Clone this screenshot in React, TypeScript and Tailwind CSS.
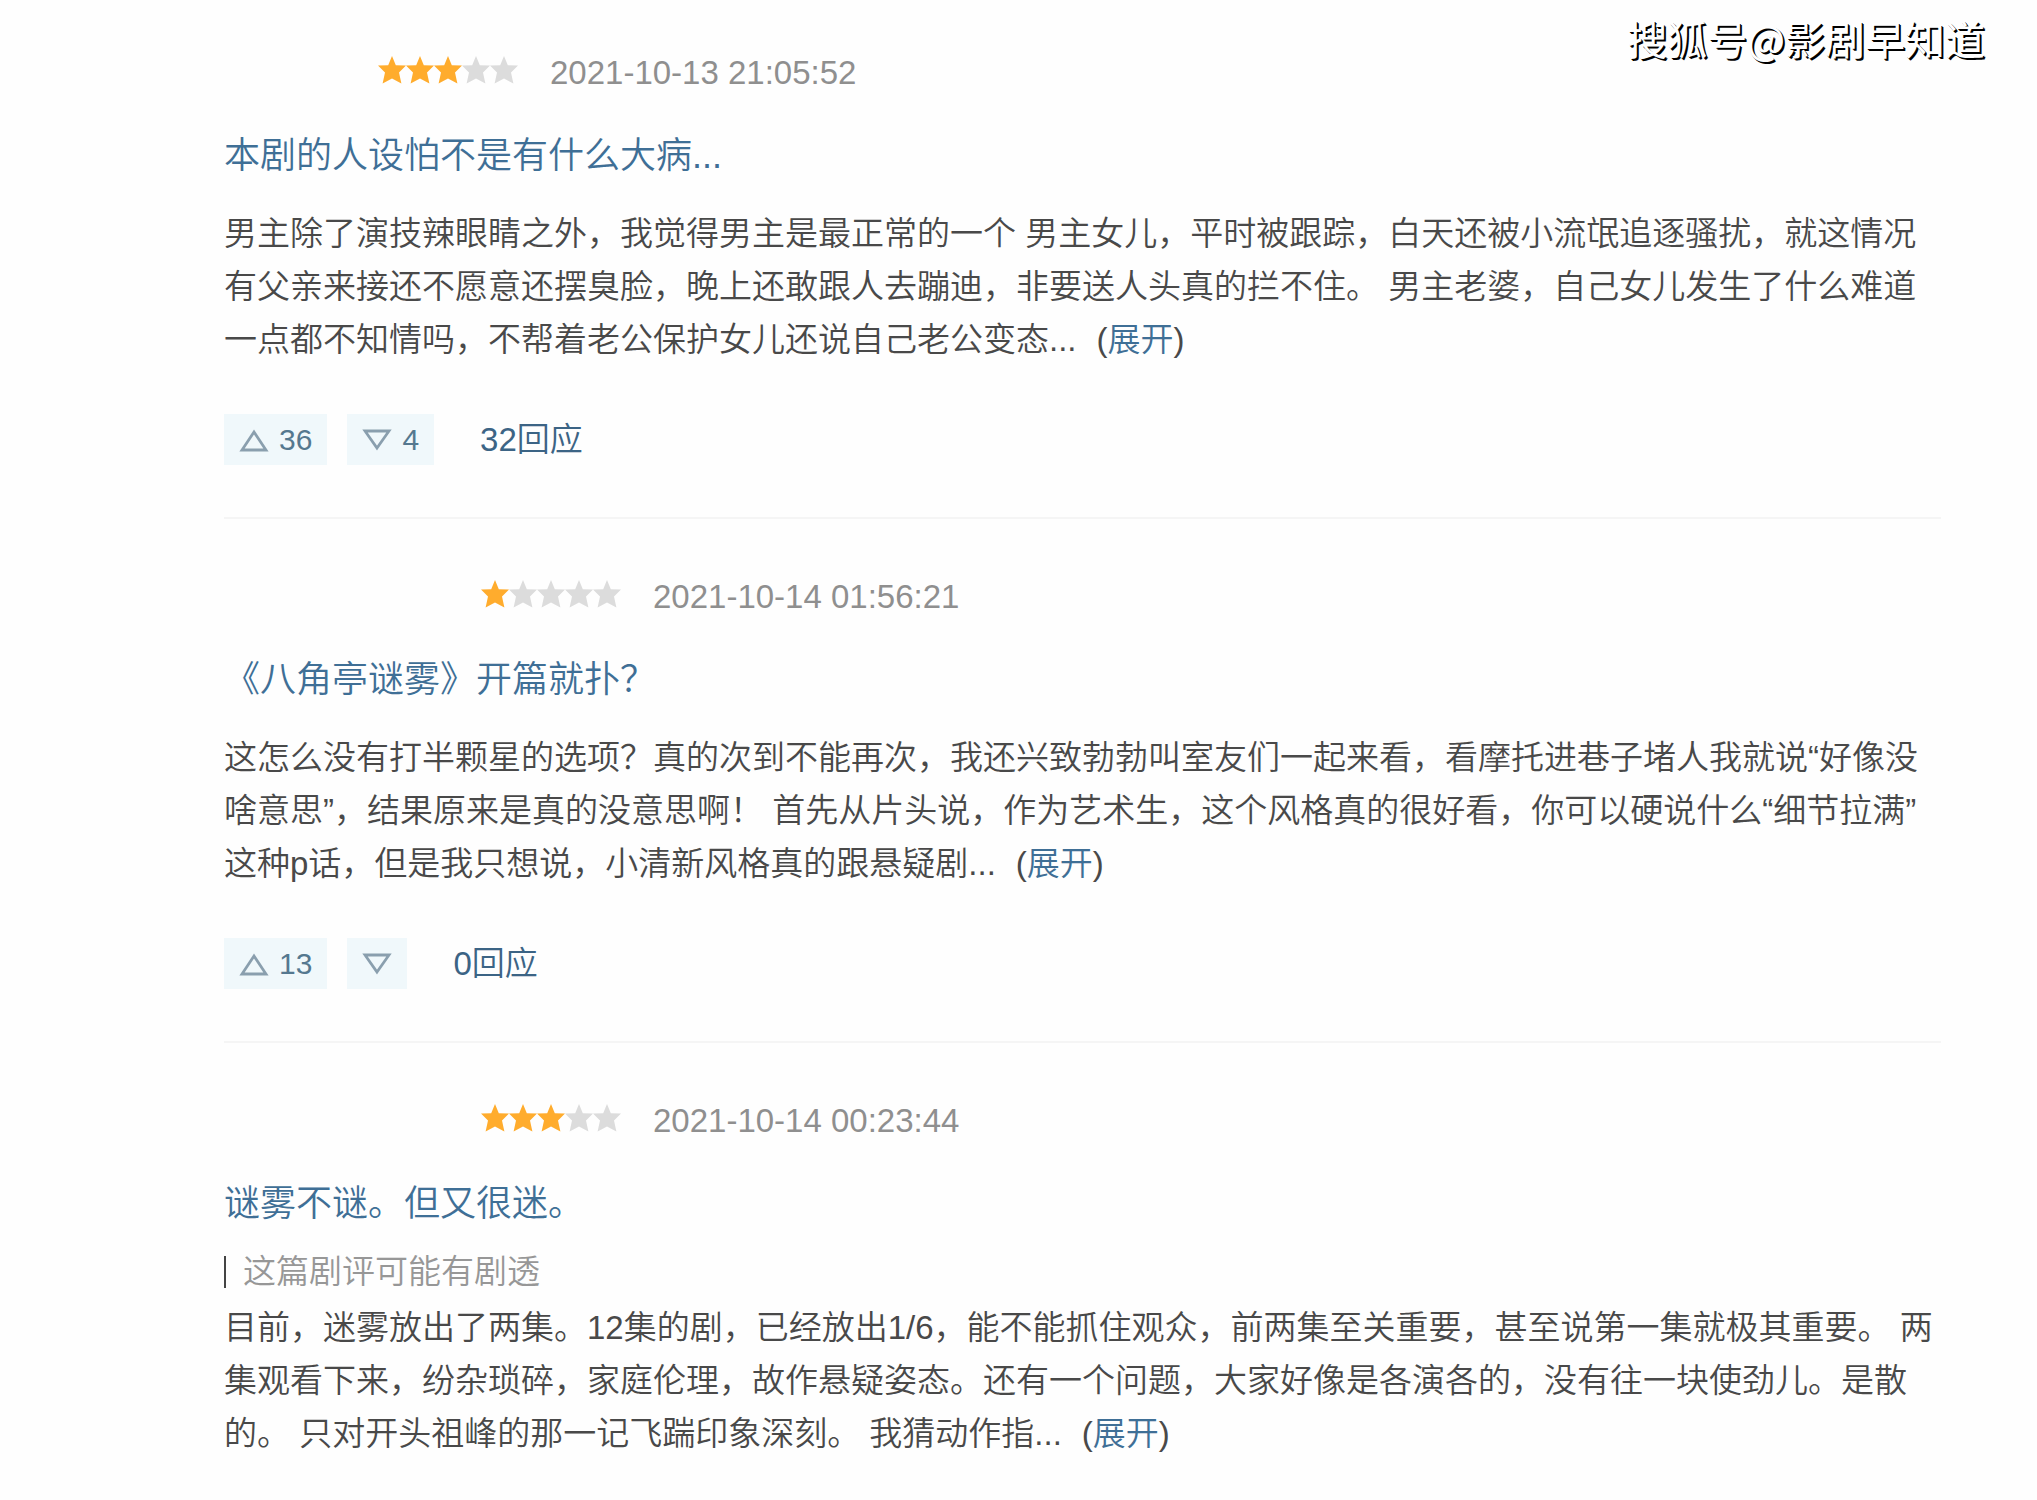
import React from 'react';

type Review = {
  stars: number;
  nameWidth: string;
  date: string;
  title: string;
  spoiler?: boolean;
  body: string;
  up: string;
  down: string;
  replies?: string;
};

const reviews: Review[] = [
  {
    stars: 3,
    nameWidth: 'w-[154px]',
    date: '2021-10-13 21:05:52',
    title: '本剧的人设怕不是有什么大病...',
    body: '男主除了演技辣眼睛之外，我觉得男主是最正常的一个 男主女儿，平时被跟踪，白天还被小流氓追逐骚扰，就这情况有父亲来接还不愿意还摆臭脸，晚上还敢跟人去蹦迪，非要送人头真的拦不住。 男主老婆，自己女儿发生了什么难道一点都不知情吗，不帮着老公保护女儿还说自己老公变态...',
    up: '36',
    down: '4',
    replies: '32回应',
  },
  {
    stars: 1,
    nameWidth: 'w-[257px]',
    date: '2021-10-14 01:56:21',
    title: '《八角亭谜雾》开篇就扑？',
    body: '这怎么没有打半颗星的选项？真的次到不能再次，我还兴致勃勃叫室友们一起来看，看摩托进巷子堵人我就说“好像没啥意思”，结果原来是真的没意思啊！ 首先从片头说，作为艺术生，这个风格真的很好看，你可以硬说什么“细节拉满”这种p话，但是我只想说，小清新风格真的跟悬疑剧...',
    up: '13',
    down: '',
    replies: '0回应',
  },
  {
    stars: 3,
    nameWidth: 'w-[257px]',
    date: '2021-10-14 00:23:44',
    title: '谜雾不谜。但又很迷。',
    spoiler: true,
    body: '目前，迷雾放出了两集。12集的剧，已经放出1/6，能不能抓住观众，前两集至关重要，甚至说第一集就极其重要。 两集观看下来，纷杂琐碎，家庭伦理，故作悬疑姿态。还有一个问题，大家好像是各演各的，没有往一块使劲儿。是散的。 只对开头祖峰的那一记飞踹印象深刻。 我猜动作指...',
    up: '',
    down: '',
  },
];

function Stars({ count }: { count: number }) {
  return (
    <div role="img" aria-label={`${count}/5`} className="mb-[6px] flex">
      {[0, 1, 2, 3, 4].map((i) => (
        <svg
          key={i}
          viewBox="0 0 28 28"
          className={i < count ? 'h-7 w-7 fill-[#ffac2d]' : 'h-7 w-7 fill-[#dcdcdc]'}
        >
          <path d="M14 0 L17.8 9.2 L28 9.6 L21 16.6 L23.4 27.4 L14 22.6 L4.6 27.4 L7 16.6 L0 9.6 L10.2 9.2 Z" />
        </svg>
      ))}
    </div>
  );
}

function Vote({ dir, count }: { dir: 'up' | 'down'; count: string }) {
  return (
    <button
      type="button"
      aria-label={dir === 'up' ? '有用' : '没用'}
      className="flex h-[51px] items-center gap-[10px] bg-[#f0f8fb] px-[15px] text-[30px] text-[#55788f]"
    >
      <svg viewBox="0 0 30 24" className="h-6 w-[30px] fill-none stroke-[#8a9fae]" strokeWidth="2.8">
        {dir === 'up' ? <path d="M15 4 L27 22 H3 Z" /> : <path d="M15 20 L27 3 H3 Z" />}
      </svg>
      {count && <span>{count}</span>}
    </button>
  );
}

function ReviewItem({ review, last }: { review: Review; last: boolean }) {
  return (
    <article className={last ? '' : 'mb-[53px] border-b-2 border-[#f5f5f5] pb-[52px]'}>
      <header className="flex h-[50px] items-center">
        <span className={`${review.nameWidth} shrink-0`} />
        <Stars count={review.stars} />
        <time className="ml-8 text-[33px] text-[#8f8f8f]">{review.date}</time>
      </header>
      <h2 className="mt-[34px] text-4xl leading-[48px]">
        <a href="#review" className="text-[#3f6f96]">{review.title}</a>
      </h2>
      {review.spoiler && (
        <p className="mt-5 flex h-12 items-center text-[33px] text-[#979797]">
          <span className="mr-[17px] h-8 w-[2px] bg-[#444444]" />
          这篇剧评可能有剧透
        </p>
      )}
      <p className={`${review.spoiler ? 'mt-[5px]' : 'mt-[27px]'} text-[33px] leading-[53px] text-[#494949]`}>
        {review.body}
        <span className="ml-5 whitespace-nowrap">
          (<a href="#expand" className="text-[#3f6f96]">展开</a>)
        </span>
      </p>
      {review.replies && (
        <div className="mt-12 flex items-center">
          <Vote dir="up" count={review.up} />
          <span className="w-5" />
          <Vote dir="down" count={review.down} />
          <a href="#replies" className="ml-[46px] text-[33px] leading-[48px] text-[#3c6485]">
            {review.replies}
          </a>
        </div>
      )}
    </article>
  );
}

export default function App() {
  return (
    <main
      lang="zh-CN"
      className="relative min-h-screen bg-[#fefefe] pt-12 pr-24 pl-[224px] font-['Liberation_Sans','Noto_Sans_CJK_SC',sans-serif] font-[350]"
    >
      <div className="absolute top-2 right-[52px] font-['Noto_Sans_CJK_SC',sans-serif] text-[40px] leading-[60px] font-normal text-white [text-shadow:1px_1px_0_#000,2px_2px_0_#000]">
        搜狐号@影剧早知道
      </div>
      {reviews.map((r, i) => (
        <ReviewItem key={r.date} review={r} last={i === reviews.length - 1} />
      ))}
    </main>
  );
}
